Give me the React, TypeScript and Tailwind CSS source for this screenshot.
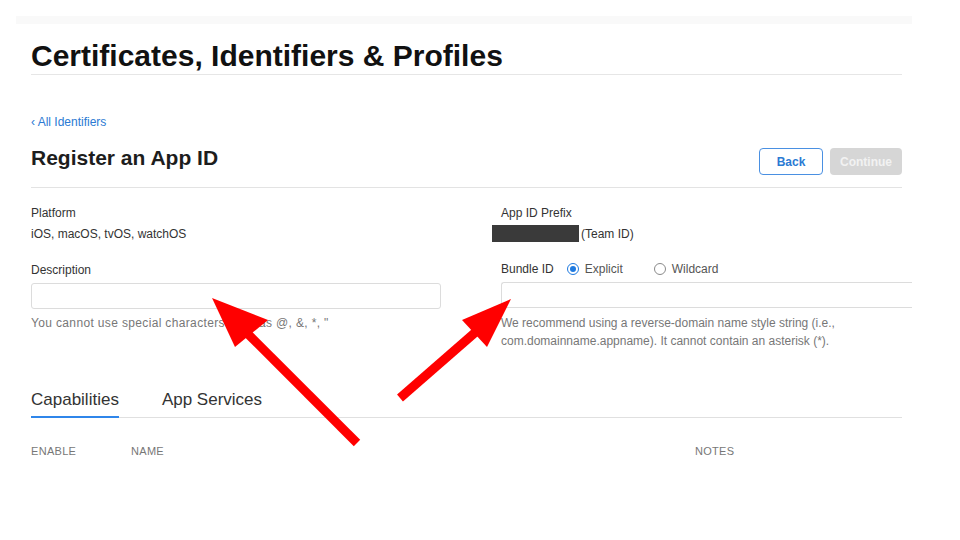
const font = { fontFamily: '"Liberation Sans", Arial, sans-serif' }

const Radio = ({ checked, label }: { checked?: boolean; label: string }) => (
  <label className="flex items-center gap-[6px] text-[12px] leading-[16px] text-[#555]">
    {checked ? (
      <span className="w-[12px] h-[12px] rounded-full border-[1.5px] border-[#1f7ae0] flex items-center justify-center">
        <span className="w-[6px] h-[6px] rounded-full bg-[#1f7ae0]" />
      </span>
    ) : (
      <span className="w-[12px] h-[12px] rounded-full border border-[#8a8a8a] bg-white" />
    )}
    {label}
  </label>
)

const Arrows = () => (
  <svg className="absolute inset-0 pointer-events-none" width="960" height="540" viewBox="0 0 960 540">
    {/* left arrow */}
    <line x1="357" y1="443" x2="246" y2="332" stroke="#ff0000" strokeWidth="9" />
    <polygon points="212,298 235,347 268,320" fill="#ff0000" />
    {/* right arrow */}
    <line x1="400" y1="398" x2="478" y2="330" stroke="#ff0000" strokeWidth="9" />
    <polygon points="511,299 462,320 487,347" fill="#ff0000" />
  </svg>
)

export default function App() {
  return (
    <div className="relative w-[960px] h-[540px] bg-white overflow-hidden" style={font}>
      <div className="mt-[16px] ml-[16px] w-[896px] h-[8px] bg-[#f9f9f9]" />

      <div className="ml-[31px] w-[871px]">
        <div className="mt-[14px] border-b border-[#e6e6e6]">
          <h1 className="text-[30px] leading-[36px] font-bold text-[#111]">
            Certificates, Identifiers &amp; Profiles
          </h1>
        </div>

        <a className="block mt-[39px] text-[12px] leading-[16px] text-[#2b7ad3]">‹ All Identifiers</a>

        <div className="mt-[14px] pb-[12px] border-b border-[#e3e3e3] flex items-start justify-between">
          <h2 className="text-[21px] leading-[28px] font-bold text-[#1d1d1d]">Register an App ID</h2>
          <div className="mt-[4px] flex gap-[7px]">
            <button className="w-[64px] h-[27px] rounded-[4px] border border-[#4a90e2] text-[12px] font-bold text-[#2b7ad3] bg-white">
              Back
            </button>
            <button className="w-[72px] h-[27px] rounded-[4px] bg-[#d6d6d6] text-[12px] font-bold text-[#f2f2f2]">
              Continue
            </button>
          </div>
        </div>

        <div className="flex gap-[60px]">
          {/* left column */}
          <div className="w-[410px] shrink-0">
            <div className="mt-[17px] text-[12px] leading-[16px] font-medium text-[#333]">Platform</div>
            <div className="mt-[5px] text-[12px] leading-[16px] text-[#333]">iOS, macOS, tvOS, watchOS</div>
            <div className="mt-[20px] text-[12px] leading-[16px] font-medium text-[#333]">Description</div>
            <div className="mt-[5px] h-[26px] rounded-[3px] border border-[#dcdcdc] bg-white" />
            <div className="mt-[6px] text-[12px] leading-[16px] text-[#777] tracking-[0.35px]">
              You cannot use special characters such as @, &amp;, *, "
            </div>
          </div>

          {/* right column */}
          <div className="w-[411px] shrink-0">
            <div className="mt-[17px] text-[12px] leading-[16px] font-medium text-[#333]">App ID Prefix</div>
            <div className="mt-[4px] -ml-[9px] flex items-center text-[12px] leading-[16px] text-[#333]">
              <span className="w-[87px] h-[17px] bg-[#3a3a3a]" />
              <span className="ml-[2px]">(Team ID)</span>
            </div>
            <div className="mt-[19px] flex items-center text-[12px] leading-[16px]">
              <span className="font-medium text-[#333]">Bundle ID</span>
              <span className="ml-[13px]"><Radio checked label="Explicit" /></span>
              <span className="ml-[31px]"><Radio label="Wildcard" /></span>
            </div>
            <div className="mt-[5px] h-[26px] rounded-l-[3px] border border-r-0 border-[#dcdcdc] bg-white" />
            <div className="mt-[6px] text-[12px] leading-[18px] text-[#777]">
              We recommend using a reverse-domain name style string (i.e.,
              <br />
              com.domainname.appname). It cannot contain an asterisk (*).
            </div>
          </div>
        </div>

        <div className="mt-[38px] flex gap-[43px] border-b border-[#e0e0e0]">
          <div className="pb-[4px] border-b-2 border-[#2f86ea] -mb-[1px] text-[17px] leading-[24px] text-[#333]">
            Capabilities
          </div>
          <div className="pb-[4px] text-[17px] leading-[24px] text-[#333]">App Services</div>
        </div>

        <div className="mt-[26px] flex text-[11px] leading-[14px] text-[#777] tracking-[0.3px]">
          <span className="w-[100px]">ENABLE</span>
          <span className="w-[564px]">NAME</span>
          <span>NOTES</span>
        </div>
      </div>

      <Arrows />
    </div>
  )
}
